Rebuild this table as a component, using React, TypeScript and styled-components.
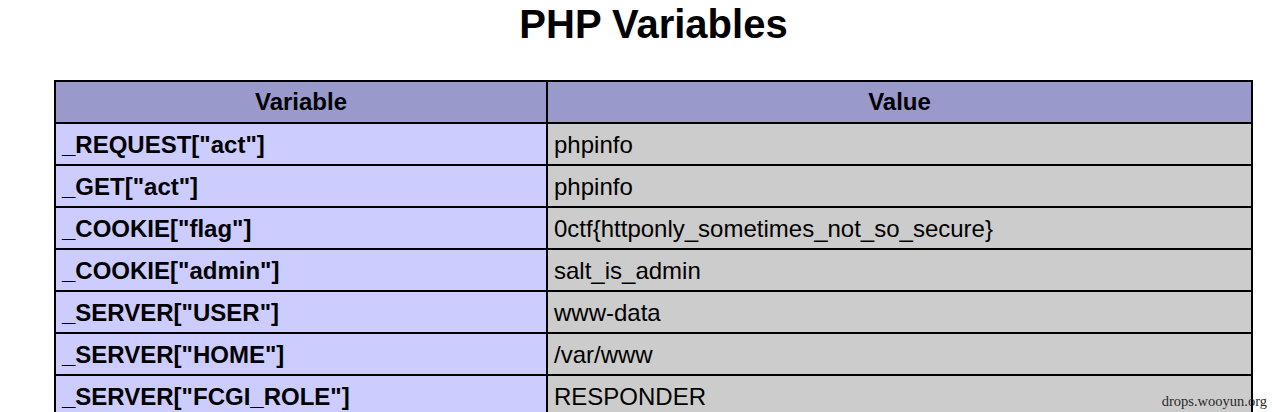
import React from "react";
import styled, { createGlobalStyle } from "styled-components";

const GlobalStyle = createGlobalStyle`
  html, body {
    margin: 0;
    padding: 0;
    background: #ffffff;
  }
  body {
    font-family: "Liberation Sans", Arial, Helvetica, sans-serif;
    color: #000;
  }
`;

const Page = styled.div`
  position: relative;
  width: 1272px;
  height: 412px;
  overflow: hidden;
  background: #fff;
`;

const Center = styled.div`
  width: 1199px;
  margin-left: 54px;
  display: flex;
  flex-direction: column;
`;

const Title = styled.h1`
  margin: 2px 0 34px;
  padding: 0;
  height: 44px;
  line-height: 44px;
  text-align: center;
  font-size: 40px;
  font-weight: bold;
  font-family: "Liberation Sans", Arial, sans-serif;
`;

const Table = styled.table`
  width: 1199px;
  border-collapse: separate;
  border-spacing: 0;
  border-top: 2px solid #000;
  border-left: 2px solid #000;
  box-sizing: border-box;
  table-layout: fixed;
`;

const HeadCell = styled.th<{ $w?: number }>`
  width: ${(p) => (p.$w ? `${p.$w}px` : "auto")};
  height: 40px;
  padding: 0 6px;
  background: #9999cc;
  border-right: 2px solid #000;
  border-bottom: 2px solid #000;
  font-size: 24px;
  font-weight: bold;
  text-align: center;
  vertical-align: middle;
  box-sizing: content-box;
`;

const Cell = styled.td<{ $kind: "e" | "v" }>`
  height: 42px;
  padding: 2px 6px 0 6px;
  background: ${(p) => (p.$kind === "e" ? "#ccccff" : "#cccccc")};
  border-right: 2px solid #000;
  border-bottom: 2px solid #000;
  font-size: 24px;
  font-weight: ${(p) => (p.$kind === "e" ? "bold" : "normal")};
  text-align: left;
  vertical-align: middle;
  white-space: nowrap;
  box-sizing: border-box;
`;

const Watermark = styled.div`
  position: absolute;
  right: 5px;
  bottom: 2px;
  font-family: "Liberation Serif", "Times New Roman", serif;
  font-size: 14.5px;
  color: #2a2a2a;
  pointer-events: none;
`;

const rows: [string, string][] = [
  ['_REQUEST["act"]', "phpinfo"],
  ['_GET["act"]', "phpinfo"],
  ['_COOKIE["flag"]', "0ctf{httponly_sometimes_not_so_secure}"],
  ['_COOKIE["admin"]', "salt_is_admin"],
  ['_SERVER["USER"]', "www-data"],
  ['_SERVER["HOME"]', "/var/www"],
  ['_SERVER["FCGI_ROLE"]', "RESPONDER"],
];

export default function App() {
  return (
    <>
      <GlobalStyle />
      <Page>
        <Center>
          <Title>PHP Variables</Title>
          <Table>
            <thead>
              <tr>
                <HeadCell $w={478}>Variable</HeadCell>
                <HeadCell>Value</HeadCell>
              </tr>
            </thead>
            <tbody>
              {rows.map(([k, v]) => (
                <tr key={k}>
                  <Cell $kind="e">{k}</Cell>
                  <Cell $kind="v">{v}</Cell>
                </tr>
              ))}
            </tbody>
          </Table>
        </Center>
        <Watermark>drops.wooyun.org</Watermark>
      </Page>
    </>
  );
}
